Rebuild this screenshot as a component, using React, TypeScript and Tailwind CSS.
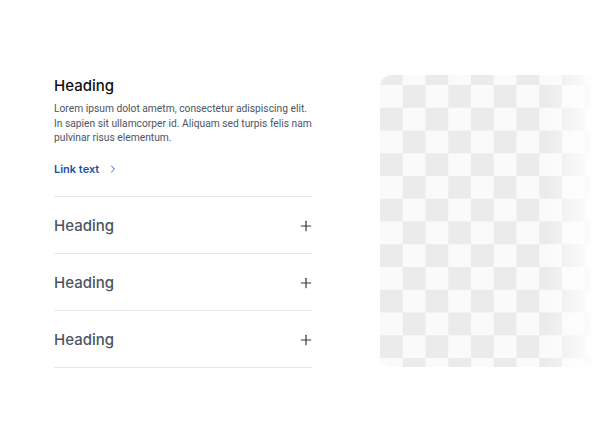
import { ChevronRight, Plus } from "lucide-react";

const items = ["Heading", "Heading", "Heading"];

function AccordionRow({ title }: { title: string }) {
  return (
    <button
      type="button"
      className="flex h-[57px] w-full items-center justify-between border-b border-[#e5e7eb] pt-[2px] text-left"
    >
      <span className="text-[15px] font-medium text-[#4b5563]">{title}</span>
      <Plus className="-mr-[2px] h-[16px] w-[16px] text-[#333840]" strokeWidth={1.8} />
    </button>
  );
}

export default function App() {
  return (
    <div
      className="flex h-[444px] w-full overflow-hidden bg-white pl-[54px] pt-[75px]"
      style={{ fontFamily: "Inter, 'Noto Sans', sans-serif" }}
    >
      <div className="w-[258px] shrink-0">
        <div className="border-b border-[#e5e7eb] pb-[19px]">
          <h2 className="pt-[1px] text-[15px] leading-[20px] font-medium text-[#111111]">Heading</h2>
          <p className="mt-[6px] whitespace-nowrap font-['Roboto',sans-serif] text-[10.25px] leading-[14.5px] text-[#4b5563]">
            Lorem ipsum dolot ametm, consectetur adispiscing elit.
            <br />
            In sapien sit ullamcorper id. Aliquam sed turpis felis nam
            <br />
            pulvinar risus elementum.
          </p>
          <a href="#" className="mt-[15px] flex items-center gap-[8px] text-[11px] font-semibold text-[#1c4fa6]">
            Link text
            <ChevronRight className="h-[12px] w-[12px]" strokeWidth={1.8} />
          </a>
        </div>
        {items.map((t, i) => (
          <AccordionRow key={i} title={t} />
        ))}
      </div>

      <div className="relative ml-[68px] h-[292px] flex-1 overflow-hidden rounded-l-[12px]">
        <div className="absolute inset-0 bg-[conic-gradient(#fafafa_25%,#ebebeb_0_50%,#fafafa_0_75%,#ebebeb_0)] bg-size-[45.5px_45.5px] bg-position-[0px_-12.75px]" />
        <div className="absolute inset-0 bg-gradient-to-r from-transparent from-78% to-white/90" />
      </div>
    </div>
  );
}
